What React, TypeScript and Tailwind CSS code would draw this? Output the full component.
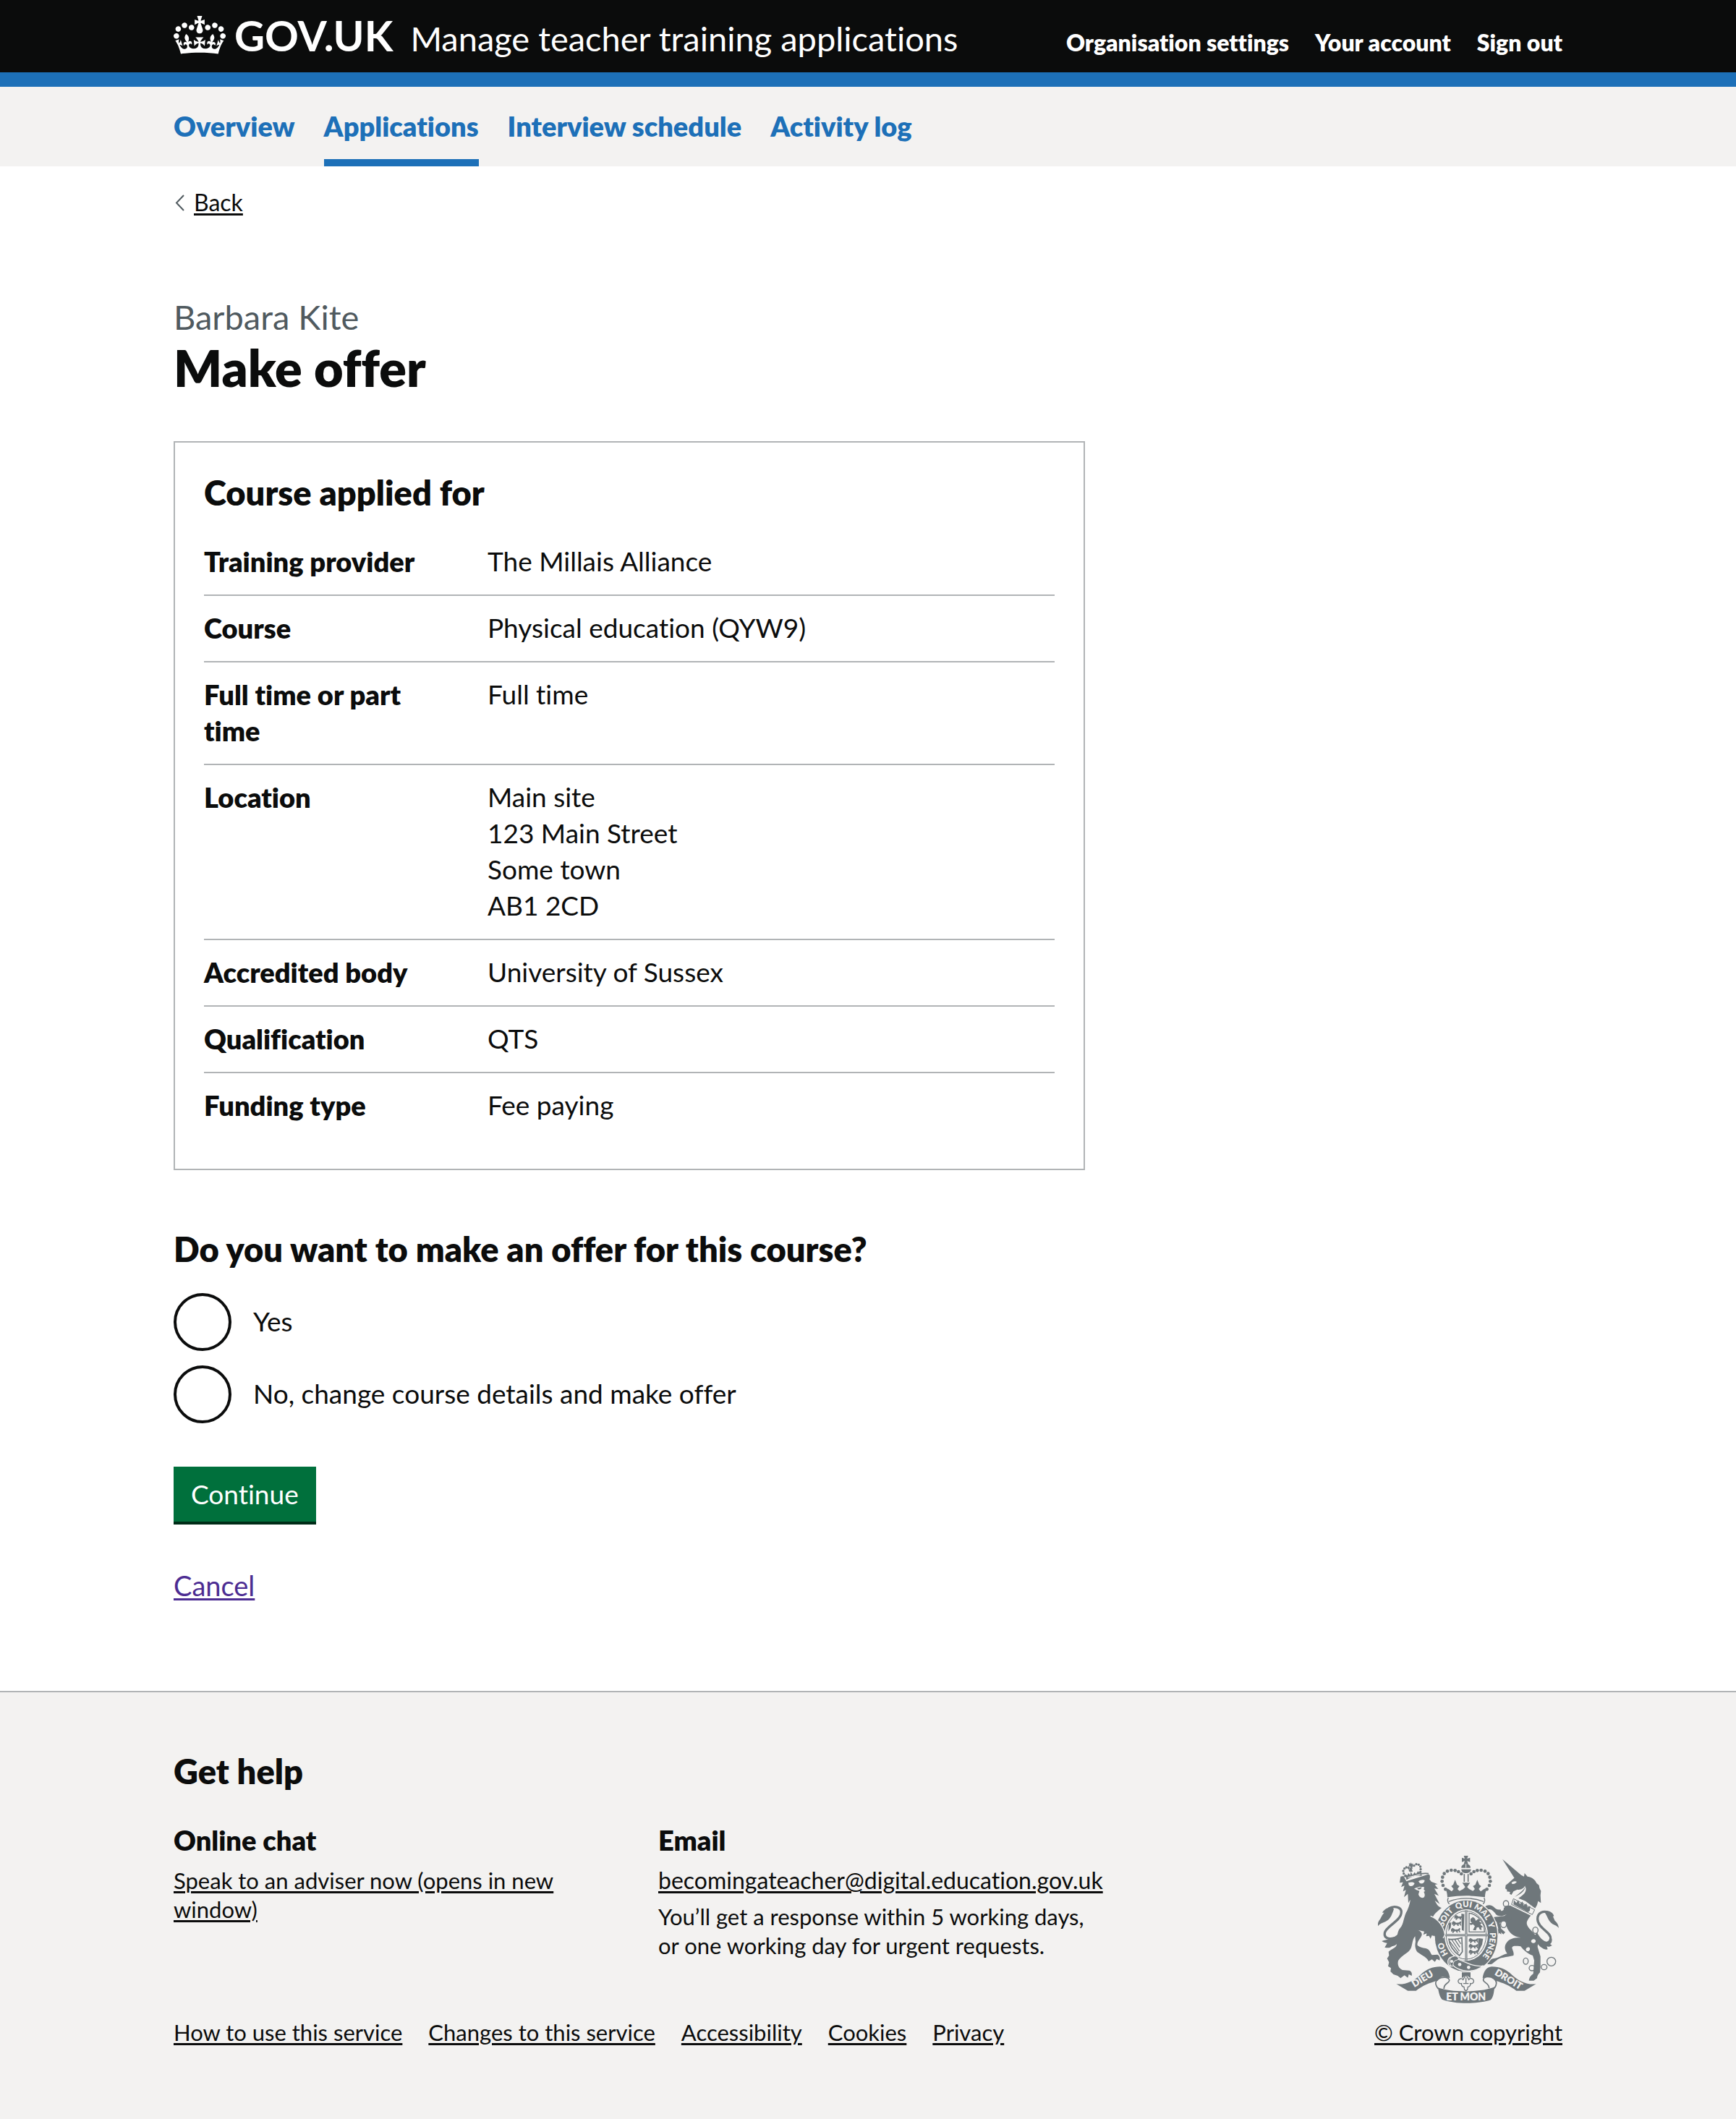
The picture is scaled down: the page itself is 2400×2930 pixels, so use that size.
import { useState } from "react";

const headerLinks = ["Organisation settings", "Your account", "Sign out"];
const sections = ["Overview", "Applications", "Interview schedule", "Activity log"];
const footerLinks = ["How to use this service", "Changes to this service", "Accessibility", "Cookies", "Privacy"];
const details: [string, string[]][] = [
  ["Training provider", ["The Millais Alliance"]],
  ["Course", ["Physical education (QYW9)"]],
  ["Full time or part time", ["Full time"]],
  ["Location", ["Main site", "123 Main Street", "Some town", "AB1 2CD"]],
  ["Accredited body", ["University of Sussex"]],
  ["Qualification", ["QTS"]],
  ["Funding type", ["Fee paying"]],
];
const options = [
  { id: "offer-yes", value: "yes", label: "Yes" },
  { id: "offer-no", value: "no", label: "No, change course details and make offer" },
];

const CROWN =
  "M25 30.2c3.5 1.5 7.7-.2 9.1-3.7 1.5-3.6-.2-7.8-3.9-9.2-3.6-1.4-7.6.3-9.1 3.9-1.4 3.5.3 7.5 3.9 9zM9 39.5c3.6 1.5 7.8-.2 9.2-3.7 1.5-3.6-.2-7.8-3.9-9.1-3.6-1.5-7.6.2-9.1 3.8-1.4 3.5.3 7.5 3.8 9zM4.4 57.2c3.5 1.5 7.7-.2 9.1-3.8 1.5-3.6-.2-7.7-3.9-9.1-3.5-1.5-7.6.3-9.1 3.8-1.4 3.5.3 7.6 3.9 9.1zm38.3-21.4c3.5 1.5 7.7-.2 9.1-3.8 1.5-3.6-.2-7.7-3.9-9.1-3.6-1.5-7.6.3-9.1 3.8-1.3 3.6.4 7.7 3.9 9.1zm64.4-5.6c-3.6 1.5-7.8-.2-9.1-3.7-1.5-3.6.2-7.8 3.8-9.2 3.6-1.4 7.7.3 9.2 3.9 1.3 3.5-.4 7.5-3.9 9zm15.9 9.3c-3.6 1.5-7.7-.2-9.1-3.7-1.5-3.6.2-7.8 3.7-9.1 3.6-1.5 7.7.2 9.2 3.8 1.5 3.5-.3 7.5-3.8 9zm4.7 17.7c-3.6 1.5-7.8-.2-9.2-3.8-1.5-3.6.2-7.7 3.9-9.1 3.6-1.5 7.7.3 9.2 3.8 1.3 3.5-.4 7.6-3.9 9.1zM89.3 35.8c-3.6 1.5-7.8-.2-9.2-3.8-1.4-3.6.2-7.7 3.9-9.1 3.6-1.5 7.7.3 9.2 3.8 1.4 3.6-.3 7.7-3.9 9.1zM69.7 17.7l8.9 4.7V9.3l-8.9 2.8c-.2-.3-.5-.6-.9-.9L72.4 0H59.6l3.5 11.2c-.3.3-.6.5-.9.9l-8.8-2.8v13.1l8.8-4.7c.3.3.6.7.9.9l-5 15.4v.1c-.2.8-.4 1.6-.4 2.4 0 4.1 3.1 7.5 7 8.1h.2c.3 0 .7.1 1 .1.4 0 .7 0 1-.1h.2c4-.6 7.1-4.1 7.1-8.1 0-.8-.1-1.7-.4-2.4V34l-5.1-15.4c.4-.2.7-.6 1-.9zM66 92.8c16.9 0 32.8 1.1 47.1 3.2 4-16.9 8.9-26.7 14-33.5l-9.6-3.4c1 4.9 1.1 7.2 0 10.2-1.5-1.4-3-4.3-4.2-8.7L108.6 76c2.8-2 5-3.2 7.5-3.3-4.4 9.4-10 11.9-13.6 11.2-4.3-.8-6.3-4.6-5.6-7.9 1-4.7 5.7-5.9 8-.5 4.3-8.7-3-11.4-7.6-8.8 7.1-7.2 7.9-13.5 2.1-21.1-8 6.1-8.1 12.3-4.5 20.8-4.7-5.4-12.1-2.5-9.5 6.2 3.4-5.2 7.9-2 7.2 3.1-.6 4.3-6.4 7.8-13.5 7.2-10.3-.9-10.9-8-11.2-13.8 2.5-.5 7.1 1.8 11 7.3L80.2 60c-4.1 4.4-8 5.3-12.3 5.4 1.4-4.4 8-11.6 8-11.6H55.5s6.4 7.2 7.9 11.6c-4.2-.1-8-1-12.3-5.4l1.4 16.4c3.9-5.5 8.5-7.7 10.9-7.3-.3 5.8-.9 12.8-11.1 13.8-7.2.6-12.9-2.9-13.5-7.2-.7-5 3.8-8.3 7.1-3.1 2.7-8.7-4.6-11.6-9.4-6.2 3.7-8.5 3.6-14.7-4.6-20.8-5.8 7.6-5 13.9 2.2 21.1-4.7-2.6-11.9.1-7.7 8.8 2.3-5.5 7.1-4.2 8.1.5.7 3.3-1.3 7.1-5.7 7.9-3.5.7-9-1.8-13.5-11.2 2.5.1 4.7 1.3 7.5 3.3l-4.7-15.4c-1.2 4.4-2.7 7.2-4.3 8.7-1.1-3-.9-5.3 0-10.2l-9.5 3.4c5 6.9 9.9 16.7 14 33.5 14.8-2.1 30.8-3.2 47.7-3.2z";

const INK = "#6f777b";
const PAPER = "#f3f2f1";

const pearls: [number, number][] = [
  [352, 217], [342, 201], [338, 184], [340, 167], [347, 152], [360, 142], [376, 138], [392, 139], [406, 144], [418, 153],
  [524, 217], [534, 201], [538, 184], [536, 167], [529, 152], [516, 142], [500, 138], [484, 139], [470, 144], [458, 153],
];
const smallPearls: [number, number][] = [
  [185, 162], [179, 152], [177, 141], [182, 131], [190, 126], [199, 128], [248, 145], [249, 134], [248, 123], [241, 115], [231, 113], [222, 119],
];
const rings: [number, number, number, number][] = [
  [603, 277, 11, 13], [725, 387, 11, 13], [685, 515, 10, 13], [711, 544, 12, 11], [761, 540, 12, 11], [791, 517, 18, 18],
];
const motto: [string, string][] = [
  ["HO", "17%"], ["SOIT", "36%"], ["QUI", "48.5%"], ["MAL", "60%"], ["Y", "69%"], ["PENSE", "81%"],
];

function Passant({ x, y }: { x: number; y: number }) {
  return (
    <path
      transform={`translate(${x} ${y})`}
      d="M1 7l6-6 6 3 5 4 12-1 6-5 4 2-3 8 3 8-5-1-3-6-4 2 2 6-7-1-1-5-8 1-3 6-6-1 3-6-7 2z"
      fill={INK}
    />
  );
}

function CoatOfArms() {
  return (
    <svg viewBox="72 78 750 612" className="h-[204px] w-[250px]" aria-hidden="true" fill={INK}>
      {/* lion tail */}
      <path d="M158 412c-32 18-62 10-58-14 5-28 70-50 69-88-1-20-30-26-52-13" fill="none" stroke={INK} strokeWidth="10" />
      <path d="M132 292c-18-2-34 8-42 22l8 0c-12 12-12 22-22 34-5 8-5 16-4 22 10-14 28-14 40-24 14-10 20-30 26-46zM158 400c-20 22-46 24-70 32 8 6 16 8 22 8-4 8-6 12-10 18 14 4 24 2 30-4 16-2 26-14 40-30z" />
      {/* lion */}
      <path d="M190 184l88-28c10-4 12 8 8 20l8 10 26 10-12 2 14 18-16-2 18 30-18-8 22 42-20-14c8 16 14 26 28 30-20 16-32 28-36 38l26 18c16 22 22 40 24 60l-10 16-4 14-14-2 2-12-10 6-6-10 8-6-20-8-6 14-6-12-12 2 2-12-14 6 4-14-26-6c14 6 20 16 14 26-4 10-20 24-16 38 12 8 20 10 34 12 18 4 18 18 26 28l22-2c10 4 12 12 10 24l-12-6-8 12-12-10-14 8c-6-16-24-22-46-38-8-12-12-24-8-44l-2-22c-16 20-8 46-26 62-16 14-36 24-44 40-4 16 2 32 18 38l28 2c10 4 12 12 10 22l-12-6-4 14-14-10-16 12-12-10-18-6-12-12 2-14-12-8 4-16-8-16 8-12-2-16c14-14 30-14 34-30 2-30 0-52 14-68 16-16 14-50 30-74 8-20 12-34 12-44l-8 14-2-38-16 14 8-30-12 6 6-24-14 6 8-20-14 2 4-26 12-2z" />
      <path d="M190 176c20-16 60-28 92-24" fill="none" stroke={INK} strokeWidth="5" />
      <path d="M198 190c10-4 22-4 26 2-4 12-16 16-24 8zM240 184c8-6 20-8 26-4-2 12-12 16-20 12zM222 214l22-8 20 2-2 10 6 6-6 4c6 10 6 20-2 24-10 2-18-4-20-14l4-14-12-4z" fill={PAPER} />
      <path d="M234 212l20-4-4 8-10 2z" />
      {/* lion crown */}
      <path d="M190 174l-6-20 10 6 4-10 8 8 2-14 8 14 8-12 6 8 8-12 6 6 6-8 4 22c-24-4-48 2-64 12z" />
      <path d="M202 144l-4-12 6 2-2-8 10 4 4 14z" />
      <path d="M196 168l52-13" stroke={PAPER} strokeWidth="3" />
      <path d="M200 108l6 4 2-6 4 6 6-2-2 8 6 2-8 4 2 8-8-2-2-8-8 0 4-6z" />
      {smallPearls.map(([x, y]) => <circle key={`${x}-${y}`} cx={x} cy={y} r="5" />)}

      {/* unicorn tail */}
      <path d="M724 424c20 20 60 24 64-2 4-28-54-42-54-82 0-26 24-36 46-26" fill="none" stroke={INK} strokeWidth="10" />
      <path d="M758 306c24-2 40 6 44 22l-4 2 8 18c8 6 14 14 16 30-10-14-22-12-32-22-14-12-16-32-32-50zM732 396c10 20 24 38 46 40 8-4 12-8 16-14 0 12-2 18-8 22l8 6c-8 6-16 6-22 4l4 12c-12 4-20-4-30-10-12-10-20-24-28-42z" />
      {/* unicorn */}
      <path d="M588 92l78 66 12 6 2-14 12 14c22 4 32 14 38 28l10 8 2 12 6 12-2 18 2 32-12-8-4 16-8 14-40-30-44-18 18-14c12-10 24-18 24-32-8 16-22 18-32 16l-16 8-8 14-8-4 2-8-14-2 2-6-8-6 2-14c14-8 24-22 38-32l14-12z" />
      <path d="M588 92l56 88 22-18z" />
      <path d="M626 190c6-6 14-8 22-4-6 8-12 10-20 8zM636 250c22-10 48-24 46-46 14 26-16 42-32 54z" fill={PAPER} />
      <path d="M634 256l88 46-10 20-86-42z" fill={PAPER} stroke={INK} strokeWidth="3" />
      <path d="M634 280l2-18 10 12 8-12 6 16 12-10 4 16 12-8 4 16 12-6-2 20-8 6z" />
      <path d="M620 284l86 42c-16 20-20 28-14 42 8 16 30 30 38 48 6 16 6 26 4 40l12 40 0 40-2 26c-8 8-12 16-12 24l-14 10-20 0c2-16 10-22 18-28l4-56-6-20c-20-6-40-24-50-38-20-2-34-4-36 6 2 10 10 22 6 32-28 8-58 6-72 22-8 4-14 14-22 14l-14 0c4-14 14-22 28-24 20-2 38-18 54-20-10-14-14-30-2-46 14-20 40-20 58-20-30-4-50-22-58-46l-12-20c-18 2-26 0-36-2 0 14 4 24 12 32 10 4 12 12 14 22l-10-6-4 8-16-20c-6-14-10-28-14-42l14-12 42-4 10-8c-18 10-36 10-44 2-8-12-16-20-26-22l-16 0-4-10c10-10 26-10 38 2 6 8 16 12 30 8 12-4 14-8 16-14z" />
      <path d="M626 336l-56 16 8 32 18 16" fill="none" stroke={INK} strokeWidth="12" />
      <path d="M580 294c6-4 14-2 14 4s-6 10-12 8zM708 430c4-8 16-8 18 0s-6 12-12 10-8-6-6-10zM686 464c4-8 14-8 16-2s-4 14-10 12-8-6-6-10z" fill={PAPER} />
      <ellipse cx="593" cy="362" rx="12" ry="14" fill={PAPER} stroke={INK} strokeWidth="4" />
      {rings.map(([x, y, rx, ry]) => (
        <ellipse key={`${x}-${y}`} cx={x} cy={y} rx={rx} ry={ry} fill="none" stroke={INK} strokeWidth="4" />
      ))}

      {/* central crown */}
      <path d="M428 78h18l-4 12 12-4v18l-12-4 4 12h-18l4-12-12 4V86l12 4zM418 128c0-10 8-16 19-16s19 6 19 16zM418 134h40c0 10-10 16-21 16s-19-6-19-16z" />
      <path d="M437 112v16" stroke={PAPER} strokeWidth="3" />
      <path d="M430 154v32M446 154v32" stroke={INK} strokeWidth="5" />
      {pearls.map(([x, y]) => <circle key={`${x}-${y}`} cx={x} cy={y} r="7" />)}
      <path d="M360 250c0-20-6-34-14-40l18 6 14 10 8-10-10-12 8-6 8-20 8 20 10 6-8 12 8 8 16-8 8-8-12-18h32l-12 18 8 8 16 8 8-8-8-12 10-6 8-20 8 20 8 6-10 12 8 10 14-10 18-6c-8 6-14 20-14 40-48-8-106-8-154 0z" />
      <path d="M366 268c44-18 100-18 144 0" fill="none" stroke={INK} strokeWidth="4" />
      <path d="M364 252c-4 8-4 18 4 26M512 252c4 8 4 18-4 26" fill="none" stroke={INK} strokeWidth="4" />

      {/* garter and shield */}
      <ellipse cx="438" cy="411" rx="134" ry="152" fill={PAPER} />
      <ellipse cx="438" cy="411" rx="130" ry="148" />
      <ellipse cx="438" cy="407" rx="90" ry="107" fill={PAPER} />
      <ellipse cx="438" cy="407" rx="83" ry="100" fill="none" stroke={INK} strokeWidth="3" />
      <path d="M438 304v212M348 407h182" stroke={INK} strokeWidth="9" />
      <path d="M438 304v212M348 407h182" stroke={PAPER} strokeWidth="2" />
      <Passant x={388} y={322} />
      <Passant x={378} y={348} />
      <Passant x={374} y={376} />
      <Passant x={448} y={418} />
      <Passant x={448} y={442} />
      <Passant x={448} y={466} />
      <path d="M488 420l20 2-4 24-18 36z" />
      <path d="M366 358l10-4-2 22-10 16zM418 318l12 2-2 70-8-4z" />
      <path d="M450 316c30 4 52 28 62 54l2 24h-64z" fill="none" stroke={INK} strokeWidth="4" />
      <path d="M456 340l10-8 8 6 4 10 10-8 10 6-6 4 12 8-8 4 12 12-8 2 2 10-8-2-4-10-8 2-4 12-12-2 4-8 4-8-8-8-10 4-4-8 10-2-6-6z" />
      <path d="M366 424c22 4 36-2 54-6l2 58-12 16c-20-14-40-36-44-68z" fill="none" stroke={INK} strokeWidth="5" />
      <path d="M378 426l32 48M390 424l22 34M402 422l14 22M370 434l36 48" stroke={INK} strokeWidth="4" />
      <defs>
        <path id="garter" d="M438 527A98 118 0 0 1 438 291A98 118 0 0 1 438 527" />
      </defs>
      <g fill={PAPER} fontFamily="Lato, sans-serif" fontWeight="800" fontSize="34" textAnchor="middle">
        {motto.map(([word, at]) => (
          <text key={word}><textPath href="#garter" startOffset={at}>{word}</textPath></text>
        ))}
      </g>
      {/* lion paw over the garter */}
      <path d="M292 330c30 14 50 40 56 74l-10 16 4 14-14-2-2-8-8 8-10-4 8-12-14-8z" />
      <path d="M290 328c32 12 54 42 60 78l-8 14" fill="none" stroke={PAPER} strokeWidth="4" />
      {/* buckle and strap */}
      <path d="M372 500c-14 8-12 30 0 36l8-6c36 34 90 34 130 4-12 4-44 0-60-8l-44-18c0-14-12-18-22-12z" stroke={PAPER} strokeWidth="4" />
      <path d="M384 496c-18 4-20 32-4 42 6-6 2-14 8-22 6-6 18-4 18-12-4-10-14-12-22-8z" stroke={PAPER} strokeWidth="3" />
      <circle cx="378" cy="516" r="6" fill={PAPER} />
      <circle cx="411" cy="529" r="7" fill={PAPER} />
      <circle cx="448" cy="541" r="7" fill={PAPER} />

      {/* pendant */}
      <path d="M420 562h36v24l-18-14-18 14z" />
      <path d="M437 572l12 20c4-8 18-6 20 4s-8 14-14 12c2 10-6 14-10 14l-2 12-6 4-6-4-2-12c-6 0-12-6-10-14-8 2-16-4-14-12s16-12 20-4z" fill={PAPER} stroke={INK} strokeWidth="4" />
      <path d="M437 584v24M426 608h22" stroke={INK} strokeWidth="4" />

      {/* ribbon */}
      <path d="M148 610c40 4 72-12 100-38 26-24 50-34 82-34 24 2 38 22 40 48l-14-4c-14-6-30 0-36 14-34 8-66 22-90 42h-34z" />
      <path d="M728 610c-40 4-72-12-100-38-26-24-50-34-84-34-24 2-34 22-38 48l12-4c14-6 32 2 40 14 32 8 64 22 88 42h34z" />
      <path d="M320 624c50 22 184 22 236-2-4 24-4 40-16 54-50 18-152 18-202-2-12-12-14-34-18-50z" />
      <path d="M322 630c-14-18-14-30 0-40 16-12 48-10 46 6-2 12-24 12-22 34M555 628c12-18 12-30-2-40-16-12-46-10-44 6 2 12 24 12 24 34" fill="none" stroke={INK} strokeWidth="5" />
      <g fill={PAPER} fontFamily="Lato, sans-serif" fontWeight="800" textAnchor="middle">
        <text fontSize="40" transform="translate(264 600) rotate(-31)">DIEU</text>
        <text fontSize="40" transform="translate(607 602) rotate(31)">DROIT</text>
        <text fontSize="42" x="437" y="678">ET MON</text>
      </g>
    </svg>
  );
}

const link = "underline decoration-[3px] underline-offset-[3px]";

export default function App() {
  const [choice, setChoice] = useState("");

  return (
    <div className="bg-white font-['Lato',sans-serif] text-[37px] leading-[50px] text-[#0b0c0c] [font-variant-ligatures:none]">
      <header className="border-b-20 border-[#1d70b8] bg-[#0b0c0c] px-8 text-white">
        <div className="mx-auto flex h-[100px] max-w-[1920px] items-baseline justify-between pt-[19px]">
          <div className="flex items-baseline gap-6">
            <a href="#" className="flex items-baseline gap-3 text-[58px] leading-[60px] font-bold">
              <svg viewBox="0 0 132 97" className="mt-[3px] h-[53px] w-[72px] self-start" fill="currentColor" aria-hidden="true">
                <path d={CROWN} fillRule="evenodd" />
              </svg>
              GOV.UK
            </a>
            <a href="#" className="text-[47px] leading-[60px]">Manage teacher training applications</a>
          </div>
          <nav aria-label="Account" className="flex gap-9 text-[32px] leading-10 font-extrabold">
            {headerLinks.map((t) => <a key={t} href="#">{t}</a>)}
          </nav>
        </div>
      </header>

      <nav aria-label="Sections" className="bg-[#f3f2f1] px-8 text-[38px] font-extrabold text-[#1d70b8]">
        <div className="mx-auto flex max-w-[1920px] gap-10">
          {sections.map((t) => (
            <a
              key={t}
              href="#"
              aria-current={t === "Applications" ? "page" : undefined}
              className="border-b-10 border-transparent pt-[29px] pb-[21px] aria-[current=page]:border-[#1d70b8]"
            >
              {t}
            </a>
          ))}
        </div>
      </nav>

      <div className="px-8">
        <div className="mx-auto max-w-[1920px] pb-[121px]">
          <a href="#" className="mt-[30px] inline-flex items-center gap-3 align-top text-[32px] leading-10">
            <svg viewBox="0 0 16 24" className="h-6 w-4" fill="none" stroke="#505a5f" strokeWidth="2" aria-hidden="true">
              <path d="M14 2L4 12.500L14 23" />
            </svg>
            <span className={link}>Back</span>
          </a>

          <main className="max-w-[1260px] pt-[108px]">
            <h1 className="text-[70px] leading-[80px] font-extrabold">
              <span className="block text-[47px] leading-[60px] font-normal text-[#505a5f]">Barbara Kite</span>
              Make offer
            </h1>

            <section className="mt-[62px] border-2 border-[#b1b4b6] px-10 pt-[39px] pb-10">
              <h2 className="mb-[21px] text-[47px] leading-[60px] font-extrabold">Course applied for</h2>
              <dl>
                {details.map(([term, lines]) => (
                  <div key={term} className="flex border-b-2 border-[#b1b4b6] pt-[19px] pb-[21px] last:border-transparent">
                    <dt className="w-1/3 pr-20 text-[38px] font-extrabold">{term}</dt>
                    <dd className="flex-1">
                      {lines.map((line) => <div key={line}>{line}</div>)}
                    </dd>
                  </div>
                ))}
              </dl>
            </section>

            <form className="mt-[79px]" onSubmit={(e) => e.preventDefault()}>
              <fieldset>
                <legend className="text-[47px] leading-[60px] font-extrabold">Do you want to make an offer for this course?</legend>
                <div className="mt-[31px] flex flex-col gap-5">
                  {options.map((o) => (
                    <div key={o.id} className="flex items-center gap-[30px]">
                      <input
                        type="radio"
                        id={o.id}
                        name="offer"
                        value={o.value}
                        checked={choice === o.value}
                        onChange={() => setChoice(o.value)}
                        className="size-20 appearance-none rounded-full border-4 border-[#0b0c0c] bg-white bg-clip-content p-4 checked:bg-[#0b0c0c]"
                      />
                      <label htmlFor={o.id} className="pb-0.5">{o.label}</label>
                    </div>
                  ))}
                </div>
              </fieldset>
              <button type="submit" className="mt-[60px] block border-b-4 border-[#002d18] bg-[#00703c] px-6 py-[13px] text-white">
                Continue
              </button>
            </form>

            <p className="mt-[59px] text-[38px]">
              <a href="#" className={`${link} text-[#4c2c92]`}>Cancel</a>
            </p>
          </main>
        </div>
      </div>

      <footer className="border-t-2 border-[#b1b4b6] bg-[#f3f2f1] px-8 pt-[79px] pb-[100px]">
        <div className="mx-auto flex max-w-[1920px] items-end justify-between text-[31px] leading-10">
          <div>
            <h2 className="text-[47px] leading-[60px] font-extrabold">Get help</h2>
            <div className="mt-10 grid max-w-[1280px] grid-cols-[repeat(2,610px)] gap-[60px]">
              <div>
                <h3 className="mb-[11px] text-[38px] leading-[50px] font-extrabold">Online chat</h3>
                <a href="#" className={link}>Speak to an adviser now (opens in new window)</a>
              </div>
              <div>
                <h3 className="mb-[11px] text-[38px] leading-[50px] font-extrabold">Email</h3>
                <a href="#" className={`${link} text-[32px]`}>becomingateacher@digital.education.gov.uk</a>
                <p className="mt-[10px]">You’ll get a response within 5 working days,<br />or one working day for urgent requests.</p>
              </div>
            </div>
            <ul className="mt-20 flex gap-9">
              {footerLinks.map((t) => (
                <li key={t}><a href="#" className={link}>{t}</a></li>
              ))}
            </ul>
          </div>
          <a href="#" className="flex flex-col items-center gap-5">
            <CoatOfArms />
            <span className={link}>© Crown copyright</span>
          </a>
        </div>
      </footer>
    </div>
  );
}
